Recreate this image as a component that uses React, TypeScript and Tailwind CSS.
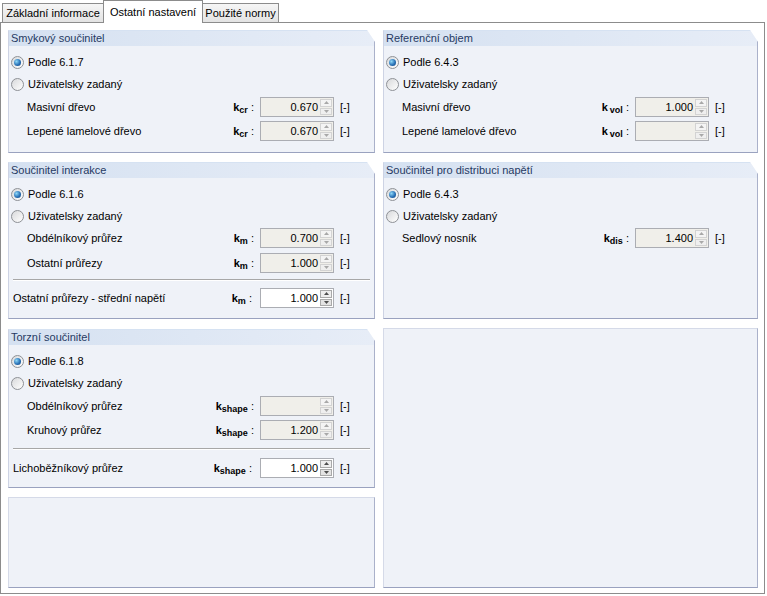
import type { ReactNode } from "react"

const Arrow = ({ up, dark }: { up?: boolean; dark?: boolean }) => (
  <svg width="5" height="3" viewBox="0 0 5 3" className="block">
    <path d={up ? "M0 3 L2.5 0 L5 3 Z" : "M0 0 L2.5 3 L5 0 Z"} fill={dark ? "#4d4d4d" : "#a8a8a8"} />
  </svg>
)

const Spin = ({ value, enabled }: { value?: string; enabled?: boolean }) => (
  <div className={`flex h-5 w-[74px] border border-[#abadb3] ${enabled ? "bg-white" : "bg-[#f0efea]"}`}>
    <div className="flex-1 pr-[2px] text-right leading-[18px]">{value}</div>
    <div className="flex w-[13px] flex-col gap-px py-px pr-px">
      <div className={`flex flex-1 items-center justify-center border ${enabled ? "border-[#a9a9a9] bg-[#eeeeee]" : "border-[#d3d3d3] bg-[#f4f4f4]"}`}>
        <Arrow up dark={enabled} />
      </div>
      <div className={`flex flex-1 items-center justify-center border ${enabled ? "border-[#a9a9a9] bg-[#e3e3e3]" : "border-[#d3d3d3] bg-[#efefef]"}`}>
        <Arrow dark={enabled} />
      </div>
    </div>
  </div>
)

const Radio = ({ label, checked, tall }: { label: string; checked?: boolean; tall?: boolean }) => (
  <div className={`flex items-center pl-[2px] ${tall ? "h-[23px]" : "h-[22px]"}`}>
    <div className="flex h-[13px] w-[13px] items-center justify-center rounded-full border border-[#8e9196] bg-[linear-gradient(135deg,#d8d9db,#ffffff)]">
      {checked && (
        <div className="h-[7px] w-[7px] rounded-full bg-[radial-gradient(circle_at_35%_35%,#8fd8f8,#2a73b8_55%,#123f7a)]" />
      )}
    </div>
    <span className="ml-[4px]">{label}</span>
  </div>
)

interface RowProps {
  label: string
  sub: string
  value?: string
  enabled?: boolean
  indent?: boolean
  gap?: boolean
}

const Row = ({ label, sub, value, enabled, indent = true, gap }: RowProps) => (
  <div className={`flex h-5 w-[345px] items-center ${indent ? "pl-[18px]" : "pl-[4px]"}`}>
    <div className="flex-1 whitespace-nowrap">{label}</div>
    <div className={`whitespace-nowrap text-right ${indent ? "pr-[6px]" : "pr-[8px]"}`}>
      <span className="font-bold">k</span>
      {gap && <span className="inline-block w-[2px]" />}
      <span className="relative top-[2px] text-[9px] font-bold">{sub}</span>
      <span> :</span>
    </div>
    <Spin value={value} enabled={enabled} />
    <div className="ml-[6px] w-[14px]">[-]</div>
  </div>
)

const Separator = ({ className }: { className: string }) => (
  <div className={`mx-[4px] h-[2px] border-t border-b border-t-[#a7a7a7] border-b-white ${className}`} />
)

const Panel = ({ title, className, children }: { title?: string; className: string; children?: ReactNode }) =>
  title ? (
    <div
      className={`flex flex-col border border-[#cdd3e4] border-t-[#d6e2f2] border-r-[#aab1ca] border-b-[#9aa2bf] bg-[#eff2f8] [clip-path:polygon(0_0,calc(100%_-_8px)_0,100%_12px,100%_100%,0_100%)] ${className}`}
    >
      <div className="h-[15px] bg-gradient-to-r from-[#d5e1f1] to-[#e7edf7] pl-[2px] leading-[15px] text-[#263a63]">{title}</div>
      <div className="flex flex-col pt-[5px]">{children}</div>
    </div>
  ) : (
    <div className={`border border-[#d5dae8] border-r-[#aab1ca] border-b-[#9aa2bf] bg-[#eff2f8] ${className}`} />
  )

const App = () => {
  return (
    <div className="h-[596px] w-[767px] bg-white text-[11px] text-black [font-family:'Liberation_Sans',Arial,sans-serif]">
      <div className="flex h-[22px] items-end">
        <div className="ml-[2px] flex h-[19px] w-[102px] items-center justify-center border border-b-0 border-[#8c8c8c] bg-gradient-to-b from-[#f6f6f6] to-[#e3e3e3] pt-px">
          Základní informace
        </div>
        <div className="relative z-10 -mb-px -ml-px flex h-[23px] w-[100px] items-start justify-center border border-b-0 border-[#8c8c8c] bg-white pt-[3px]">
          Ostatní nastavení
        </div>
        <div className="-ml-px flex h-[19px] w-[77px] items-center justify-center border border-b-0 border-[#8c8c8c] bg-gradient-to-b from-[#f6f6f6] to-[#e3e3e3] pt-px">
          Použité normy
        </div>
      </div>
      <div className="flex h-[572px] w-[765px] gap-[8px] border border-[#8c8c8c] pl-[7px] pt-[7px]">
        <div className="flex w-[367px] flex-col gap-[9px]">
          <Panel title="Smykový součinitel" className="h-[123px]">
            <Radio label="Podle 6.1.7" checked />
            <Radio label="Uživatelsky zadaný" tall />
            <div className="mt-[1px] flex flex-col gap-[4px]">
              <Row label="Masivní dřevo" sub="cr" value="0.670" />
              <Row label="Lepené lamelové dřevo" sub="cr" value="0.670" />
            </div>
          </Panel>
          <Panel title="Součinitel interakce" className="h-[157px]">
            <Radio label="Podle 6.1.6" checked />
            <Radio label="Uživatelsky zadaný" />
            <div className="mt-[1px] flex flex-col gap-[5px]">
              <Row label="Obdélníkový průřez" sub="m" value="0.700" />
              <Row label="Ostatní průřezy" sub="m" value="1.000" />
            </div>
            <Separator className="mt-[6px] mb-[7px]" />
            <Row label="Ostatní průřezy - střední napětí" sub="m" value="1.000" enabled indent={false} />
          </Panel>
          <Panel title="Torzní součinitel" className="mt-px h-[159px]">
            <Radio label="Podle 6.1.8" checked />
            <Radio label="Uživatelsky zadaný" />
            <div className="mt-[2px] flex flex-col gap-[4px]">
              <Row label="Obdélníkový průřez" sub="shape" />
              <Row label="Kruhový průřez" sub="shape" value="1.200" />
            </div>
            <Separator className="mt-[8px] mb-[8px]" />
            <Row label="Lichoběžníkový průřez" sub="shape" value="1.000" enabled indent={false} />
          </Panel>
          <Panel className="h-[91px]" />
        </div>
        <div className="flex w-[375px] flex-col gap-[9px]">
          <Panel title="Referenční objem" className="h-[123px]">
            <Radio label="Podle 6.4.3" checked />
            <Radio label="Uživatelsky zadaný" tall />
            <div className="mt-[1px] flex flex-col gap-[4px]">
              <Row label="Masivní dřevo" sub="vol" value="1.000" gap />
              <Row label="Lepené lamelové dřevo" sub="vol" gap />
            </div>
          </Panel>
          <Panel title="Součinitel pro distribuci napětí" className="h-[157px]">
            <Radio label="Podle 6.4.3" checked />
            <Radio label="Uživatelsky zadaný" />
            <div className="mt-[1px] flex flex-col">
              <Row label="Sedlový nosník" sub="dis" value="1.400" />
            </div>
          </Panel>
          <Panel className="h-[260px]" />
        </div>
      </div>
    </div>
  )
}

export default App
